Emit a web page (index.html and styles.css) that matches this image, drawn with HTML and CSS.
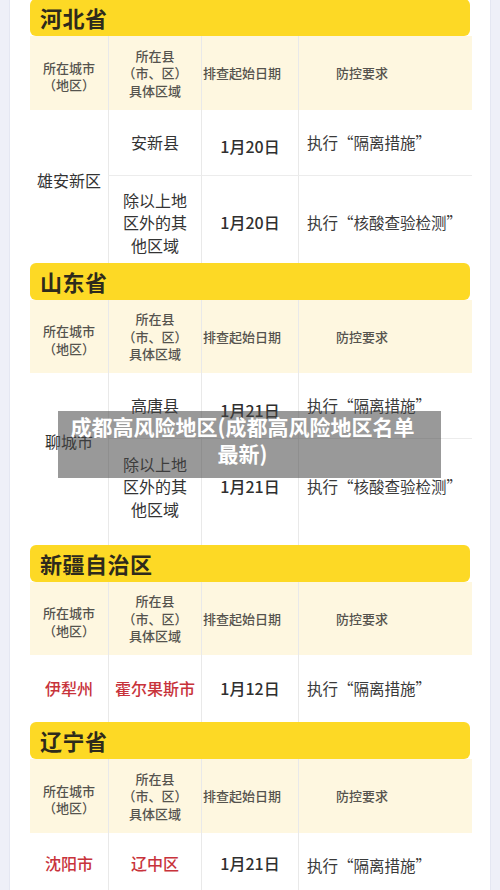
FILE: index.html
```html
<!DOCTYPE html>
<html>
<head lang="zh">
    <meta charset="UTF-8">
    <title>成都高风险地区</title>
    <link rel="stylesheet" href="styles.css">
</head>
<body>

    <div class="card">

        <!-- 河北省 -->
        <div class="section">
            <div class="prov first">河北省</div>
            <div class="grid hebei">
                <div class="th c1">所在城市<br>（地区）</div>
                <div class="th c2">所在县<br>（市、区）<br>具体区域</div>
                <div class="th c3">排查起始日期</div>
                <div class="th c4">防控要求</div>

                <div class="td city span2 up13">雄安新区</div>
                <div class="td area">安新县</div>
                <div class="td date down7">1月20日</div>
                <div class="td rule">执行“隔离措施”</div>

                <div class="td area split down6">除以上地<br>区外的其<br>他区域</div>
                <div class="td date split down6">1月20日</div>
                <div class="td rule split down6">执行“核酸查验检测”</div>
            </div>
        </div>

        <!-- 山东省 -->
        <div class="section">
            <div class="prov">山东省</div>
            <div class="grid shandong">
                <div class="th c1">所在城市<br>（地区）</div>
                <div class="th c2">所在县<br>（市、区）<br>具体区域</div>
                <div class="th c3">排查起始日期</div>
                <div class="th c4">防控要求</div>

                <div class="td city span2 up36">聊城市</div>
                <div class="td area">高唐县</div>
                <div class="td date down9">1月21日</div>
                <div class="td rule">执行“隔离措施”</div>

                <div class="td area split up11">除以上地<br>区外的其<br>他区域</div>
                <div class="td date split up11">1月21日</div>
                <div class="td rule split up11">执行“核酸查验检测”</div>
            </div>
        </div>

        <!-- 新疆 -->
        <div class="section">
            <div class="prov">新疆自治区</div>
            <div class="grid xinjiang">
                <div class="th c1">所在城市<br>（地区）</div>
                <div class="th c2">所在县<br>（市、区）<br>具体区域</div>
                <div class="th c3">排查起始日期</div>
                <div class="th c4">防控要求</div>

                <div class="td city red">伊犁州</div>
                <div class="td area red">霍尔果斯市</div>
                <div class="td date">1月12日</div>
                <div class="td rule">执行“隔离措施”</div>
            </div>
        </div>

        <!-- 辽宁省 -->
        <div class="section">
            <div class="prov">辽宁省</div>
            <div class="grid liaoning">
                <div class="th c1">所在城市<br>（地区）</div>
                <div class="th c2">所在县<br>（市、区）<br>具体区域</div>
                <div class="th c3">排查起始日期</div>
                <div class="th c4">防控要求</div>

                <div class="td city red">沈阳市</div>
                <div class="td area red">辽中区</div>
                <div class="td date">1月21日</div>
                <div class="td rule down4">执行“隔离措施”</div>
            </div>
        </div>

    </div>

    <div class="banner">成都高风险地区(成都高风险地区名单最新)</div>

</body>
</html>
```

FILE: styles.css
```css
* {
    padding: 0;
    margin: 0;
    box-sizing: border-box;
}
body {
    background-color: #eef0f8;
    font-family: "Noto Sans CJK SC", "Noto Sans", sans-serif;
    color: #333;
    height: 890px;
    overflow: hidden;
    position: relative;
}
.card {
    margin: -1px 9px 0;
    padding: 0 20px;
    background-color: #fff;
    border-left: 1px solid #e4e7f2;
    border-right: 1px solid #e4e7f2;
    min-height: 900px;
}
.prov {
    height: 37px;
    line-height: 37px;
    padding-left: 10px;
    background-color: #fdd925;
    border-radius: 6px;
    font-size: 22px;
    font-weight: bold;
    color: #2e2a1c;
    letter-spacing: 0.5px;
}
.grid {
    display: grid;
    grid-template-columns: 78px 93px 97px 174px;
}
.hebei {
    grid-template-rows: 74px 65px 88px;
}
.shandong {
    grid-template-rows: 73px 65px 107px;
}
.xinjiang {
    grid-template-rows: 73px 67px;
}
.liaoning {
    grid-template-rows: 74px 60px;
}
.th, .td {
    display: flex;
    align-items: center;
    justify-content: center;
    text-align: center;
}
.th {
    background-color: #fef7e0;
    font-size: 13px;
    line-height: 17.5px;
    font-weight: 500;
    color: #55534e;
}
.th.c1 {
    padding-top: 6px;
}
.th.c3 {
    justify-content: flex-start;
    padding-left: 1px;
}
.th.c4 {
    justify-content: flex-start;
    padding-left: 37px;
}
.c2, .c3, .c4, .area, .date, .rule {
    border-left: 1px solid #e9e9e9;
}
.td {
    font-size: 16px;
    line-height: 22.5px;
    color: #333;
}
.span2 {
    grid-row: span 2;
}
.date {
    font-weight: 500;
    color: #2f2f2f;
}
.rule {
    justify-content: flex-start;
    padding-left: 8px;
    font-size: 15.5px;
    color: #3a3a3a;
    white-space: nowrap;
}
.split {
    border-top: 1px solid #ececec;
}
.red {
    color: #c8333b;
    font-weight: 500;
}
.up13 { padding-bottom: 13px; }
.up36 { padding-bottom: 36px; }
.up11 { padding-bottom: 11px; }
.down4 { padding-top: 4px; }
.down6 { padding-top: 6px; }
.down7 { padding-top: 7px; }
.down9 { padding-top: 9px; }

/* 标题遮罩 */
.banner {
    position: absolute;
    left: 58px;
    top: 411px;
    width: 383px;
    height: 67px;
    padding: 2px 24px 0 10px;
    background-color: rgba(70, 70, 70, 0.55);
    color: #fff;
    font-size: 21px;
    line-height: 27px;
    font-weight: bold;
    text-align: center;
}
```
